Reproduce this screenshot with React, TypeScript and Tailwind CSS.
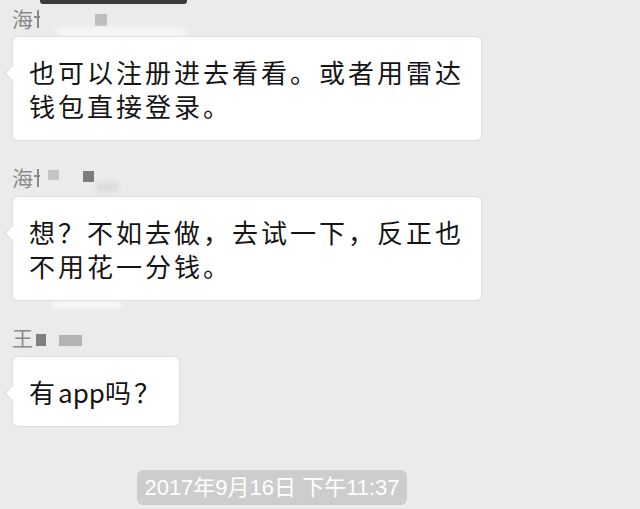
import React from 'react';

const cjk = "font-['Noto_Sans_CJK_SC','Noto_Sans',sans-serif]";

function Tail() {
    return (
        <span className="absolute left-[-6px] top-[30px] w-[12px] h-[12px] rotate-45 bg-white border-l border-b border-[#dcdcdc]" />
    );
}

function Bubble({ lines, width }: { lines: React.ReactNode[]; width?: string }) {
    return (
        <div className={`relative ml-[12px] bg-white border border-[#dedede] rounded-[6px] pl-[16px] pr-[16px] pt-[18px] pb-[17px] ${width ?? 'self-start'}`}>
            <Tail />
            {lines.map((line, i) => (
                <div key={i} className="relative text-[26px] leading-[34px] tracking-[3px] text-[#141414] whitespace-nowrap">
                    {line}
                </div>
            ))}
        </div>
    );
}

// left half of a character that the redaction covers
function Stub() {
    return (
        <span className="relative ml-[1px] w-[6px] h-[18px] mt-[2px]">
            <span className="absolute left-[3px] top-0 w-[2px] h-[18px] bg-[#8a8a8a]" />
            <span className="absolute left-0 top-[6px] w-[6px] h-[2px] bg-[#8a8a8a]" />
        </span>
    );
}

export default function App() {
    return (
        <div className={`w-[640px] h-[509px] bg-[#ebebeb] overflow-hidden flex flex-col ${cjk}`}>
            {/* redacted header strip */}
            <div className="ml-[40px] w-[147px] h-[4px] bg-[#3a3a3a] rounded-b-[3px]" />

            {/* sender 1 */}
            <div className="relative mt-[2px] mb-[6px] ml-[12px] h-[24px] flex items-center text-[21px] leading-[24px] text-[#8a8a8a]">
                <span>海</span>
                <Stub />
                <span className="ml-[55px] mt-[4px] w-[12px] h-[12px] bg-[#bdbdbd]" />
                <span className="absolute left-[45px] top-[22px] w-[130px] h-[8px] bg-white/70 blur-[3px] rounded-full" />
            </div>
            <Bubble width="w-[470px]" lines={['也可以注册进去看看。或者用雷达', '钱包直接登录。']} />

            {/* sender 2 */}
            <div className="relative mt-[24px] mb-[7px] ml-[12px] h-[24px] flex items-center text-[21px] leading-[24px] text-[#8a8a8a]">
                <span>海</span>
                <Stub />
                <span className="ml-[8px] w-[11px] h-[10px] bg-[#c4c4c4] self-start mt-[5px]" />
                <span className="ml-[24px] w-[11px] h-[11px] bg-[#7d7d7d] self-start mt-[6px]" />
                <span className="absolute left-[84px] top-[17px] w-[22px] h-[10px] bg-[#dcdcdc] blur-[2px]" />
                <span className="absolute left-[40px] top-[137px] w-[70px] h-[6px] bg-white/80 blur-[2px] rounded-full" />
            </div>
            <Bubble width="w-[470px]" lines={['想？不如去做，去试一下，反正也', '不用花一分钱。']} />

            {/* sender 3 */}
            <div className="mt-[24px] mb-[7px] ml-[12px] h-[24px] flex items-center text-[21px] leading-[24px] text-[#8a8a8a]">
                <span>王</span>
                <span className="ml-[3px] mt-[6px] w-[10px] h-[12px] bg-[#7f7f7f]" />
                <span className="ml-[13px] mt-[6px] w-[23px] h-[11px] bg-[#b3b3b3]" />
            </div>
            <Bubble lines={[<>有<span className="tracking-normal">app</span>吗？</>]} />

            {/* timestamp */}
            <div className="mt-[43px] ml-[137px] w-[270px] h-[35px] rounded-[6px] bg-[#cdcdcd] flex items-center justify-center text-white text-[22px] font-['Liberation_Sans','Noto_Sans_CJK_SC',sans-serif]">
                2017年9月16日 下午11:37
            </div>
        </div>
    );
}
